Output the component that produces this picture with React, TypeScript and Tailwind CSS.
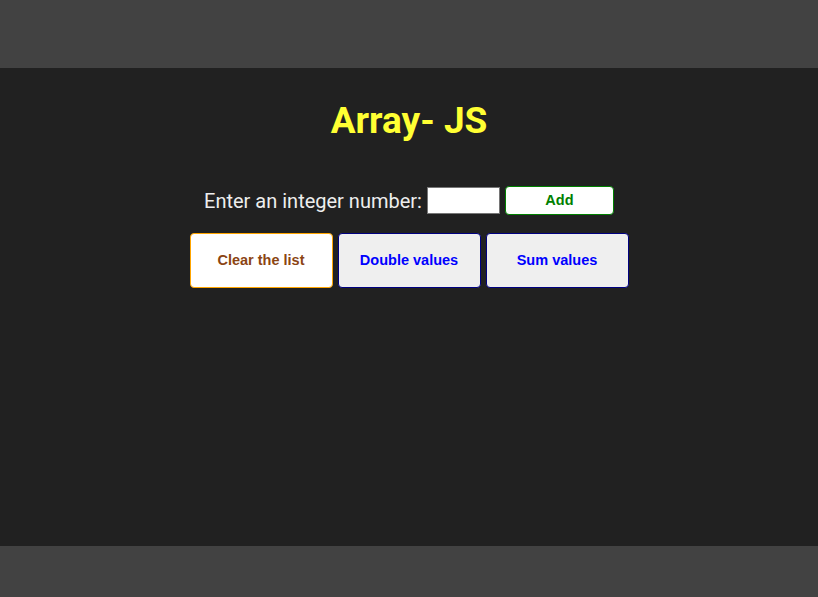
export default function App() {
  return (
    <div className="flex h-[597px] w-full flex-col bg-[#424242] font-['Roboto',sans-serif]">
      <div className="h-[68px] shrink-0" />
      <main className="flex h-[478px] shrink-0 flex-col items-center bg-[#212121] pt-[30px]">
        <h1 className="text-[37px] font-bold leading-[46px] text-[#ffff33]">Array- JS</h1>
        <div className="mt-[42px] flex items-center">
          <label className="text-[20px] leading-6 text-[#eeeeee]">Enter an integer number:</label>
          <input type="text" className="ml-[5px] h-[27px] w-[73px] border border-[#767676] bg-white" />
          <button className="ml-[5px] h-[29px] w-[109px] rounded-[4px] border border-[#008000] bg-white font-['Liberation_Sans',Arial,sans-serif] text-[14.5px] font-bold text-[#008000]">
            Add
          </button>
        </div>
        <div className="mt-[18px] flex gap-[5px] font-['Liberation_Sans',Arial,sans-serif] text-[14.5px] font-bold">
          <button className="h-[55px] w-[143px] rounded-[4px] border border-[#ffa500] bg-white text-[#8b4513]">
            Clear the list
          </button>
          <button className="h-[55px] w-[143px] rounded-[4px] border border-[#000080] bg-[#efefef] text-[#0000ff]">
            Double values
          </button>
          <button className="h-[55px] w-[143px] rounded-[4px] border border-[#000080] bg-[#efefef] text-[#0000ff]">
            Sum values
          </button>
        </div>
      </main>
      <div className="flex-1" />
    </div>
  )
}
